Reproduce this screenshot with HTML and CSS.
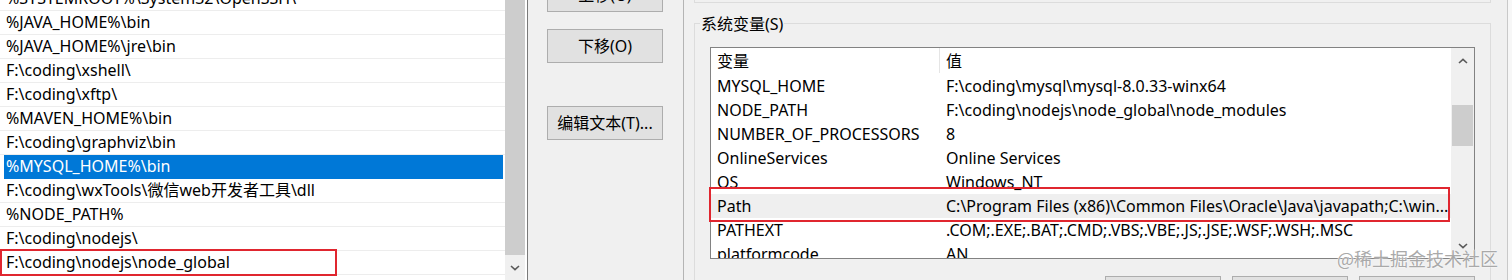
FILE: index.html
```html
<!DOCTYPE html>
<html lang="zh-CN">
<head>
<meta charset="utf-8">
<title>环境变量</title>
<link rel="stylesheet" href="styles.css">
</head>
<body>
<div class="screen">
  <section class="edit-dlg">
    <div class="pathlist">
      <div class="path-rows">
        <div class="prow">%SYSTEMROOT%\System32\OpenSSH\</div>
        <div class="prow">%JAVA_HOME%\bin</div>
        <div class="prow">%JAVA_HOME%\jre\bin</div>
        <div class="prow">F:\coding\xshell\</div>
        <div class="prow">F:\coding\xftp\</div>
        <div class="prow">%MAVEN_HOME%\bin</div>
        <div class="prow">F:\coding\graphviz\bin</div>
        <div class="prow sel">%MYSQL_HOME%\bin</div>
        <div class="prow">F:\coding\wxTools\微信web开发者工具\dll</div>
        <div class="prow">%NODE_PATH%</div>
        <div class="prow">F:\coding\nodejs\</div>
        <div class="prow">F:\coding\nodejs\node_global<span class="mark mark-left"></span></div>
        <div class="prow"></div>
      </div>
      <div class="pscroll">
        <div class="pthumb"></div>
        <div class="arrow arrow-down">
          <svg width="10" height="6" viewBox="0 0 10 6"><path d="M1 1l4 3.6L9 1" fill="none" stroke="#5a5a5a" stroke-width="1.6"/></svg>
        </div>
      </div>
    </div>
    <div class="btn-col">
      <button class="btn btn-up">上移(U)</button>
      <button class="btn btn-down">下移(O)</button>
      <button class="btn btn-edit">编辑文本(T)...</button>
    </div>
  </section>

  <section class="env-dlg">
    <div class="ug-end"></div>
    <div class="group">
      <div class="g-title">系统变量(S)</div>
      <div class="sys-list">
        <div class="sys-view">
          <div class="sys-head">
            <div class="c1 hc1">变量</div>
            <div class="c2">值</div>
          </div>
          <div class="sys-row"><div class="c1">MYSQL_HOME</div><div class="c2">F:\coding\mysql\mysql-8.0.33-winx64</div></div>
          <div class="sys-row"><div class="c1">NODE_PATH</div><div class="c2">F:\coding\nodejs\node_global\node_modules</div></div>
          <div class="sys-row"><div class="c1">NUMBER_OF_PROCESSORS</div><div class="c2">8</div></div>
          <div class="sys-row"><div class="c1">OnlineServices</div><div class="c2">Online Services</div></div>
          <div class="sys-row"><div class="c1">OS</div><div class="c2">Windows_NT</div></div>
          <div class="sys-row hl"><div class="c1">Path</div><div class="c2">C:\Program Files (x86)\Common Files\Oracle\Java\javapath;C:\win...</div></div>
          <div class="sys-row"><div class="c1">PATHEXT</div><div class="c2">.COM;.EXE;.BAT;.CMD;.VBS;.VBE;.JS;.JSE;.WSF;.WSH;.MSC</div></div>
          <div class="sys-row"><div class="c1">platformcode</div><div class="c2">AN</div></div>
        </div>
        <div class="sys-scroll">
          <div class="arrow arrow-up">
            <svg width="10" height="6" viewBox="0 0 10 6"><path d="M1 5l4-3.6L9 5" fill="none" stroke="#5a5a5a" stroke-width="1.6"/></svg>
          </div>
          <div class="sthumb"></div>
          <div class="sspacer"></div>
          <div class="arrow arrow-down2">
            <svg width="10" height="6" viewBox="0 0 10 6"><path d="M1 1l4 3.6L9 1" fill="none" stroke="#5a5a5a" stroke-width="1.6"/></svg>
          </div>
        </div>
        <span class="mark mark-right"></span>
      </div>
      <div class="sys-btns">
        <button class="btn">新建(W)...</button>
        <button class="btn">编辑(I)...</button>
        <button class="btn">删除(L)</button>
      </div>
    </div>
  </section>
  <div class="side-edge"></div>

  <div class="wm">@稀土掘金技术社区</div>
</div>
</body>
</html>
```

FILE: styles.css
```css
* { box-sizing: border-box; }

html, body {
  margin: 0;
  padding: 0;
}

body {
  width: 1512px;
  height: 280px;
  overflow: hidden;
  background: #f0f0f0;
  font-family: "Noto Sans", "Noto Sans CJK SC", sans-serif;
  font-size: 16px;
  color: #000;
}

.screen {
  position: relative;
  display: flex;
  width: 1512px;
  height: 280px;
  overflow: hidden;
  background: #f7f7f7;
}

/* ---------- left: edit environment variable dialog ---------- */
.edit-dlg {
  display: flex;
  flex: none;
  width: 684px;
  height: 280px;
  background: #f0f0f0;
  border-right: 1px solid #b4b4b4;
}

.pathlist {
  display: flex;
  flex: none;
  width: 528px;
  height: 280px;
  background: #fff;
  border-right: 1px solid #7a7a7a;
}

.path-rows {
  flex: none;
  width: 505px;
  margin-top: -13px;
}

.prow {
  position: relative;
  height: 24px;
  line-height: 23px;
  padding-left: 6px;
  border-bottom: 1px solid #ededed;
  white-space: nowrap;
}

.prow.sel {
  margin: 0 2px 0 4px;
  padding-left: 2px;
  background: #0078d7;
  border-bottom-color: #0078d7;
  color: #fff;
}

.mark {
  position: absolute;
  border: 2px solid #e0262f;
  pointer-events: none;
}

.mark-left {
  left: 0;
  top: -2px;
  width: 337px;
  height: 27px;
}

.pscroll {
  display: flex;
  flex: none;
  flex-direction: column;
  width: 20px;
  background: #f0f0f0;
}

.pthumb {
  flex: 1;
  background: #cdcdcd;
}

.arrow {
  display: flex;
  flex: none;
  align-items: center;
  justify-content: center;
  height: 25px;
}

.btn-col {
  display: flex;
  flex: none;
  flex-direction: column;
  width: 116px;
  margin-left: 19px;
}

.btn {
  flex: none;
  width: 116px;
  height: 34px;
  padding: 0;
  border: 1px solid #adadad;
  background: #e1e1e1;
  font: inherit;
  line-height: 32px;
  color: #000;
  text-align: center;
}

.btn-up { margin-top: -22px; }
.btn-down { margin-top: 17px; }
.btn-edit { margin-top: 43px; }

/* ---------- right: environment variables dialog ---------- */
.env-dlg {
  flex: none;
  width: 824px;
  height: 280px;
  padding-left: 10px;
  background: #f0f0f0;
  border-right: 1px solid #c9c9c9;
}

.ug-end {
  width: 797px;
  height: 3px;
  border: 1px solid #dcdcdc;
  border-top: none;
}

.group {
  width: 797px;
  height: 260px;
  margin-top: 20px;
  border: 1px solid #dcdcdc;
  border-bottom: none;
}

.g-title {
  width: max-content;
  height: 24px;
  margin: -12px 0 0 5px;
  padding: 0 1px;
  line-height: 24px;
  background: #f0f0f0;
}

.sys-list {
  position: relative;
  display: flex;
  width: 765px;
  height: 212px;
  margin: 11px 0 0 15px;
  border: 1px solid #828282;
  background: #fff;
}

.sys-view {
  flex: none;
  width: 740px;
  height: 210px;
  overflow: hidden;
}

.sys-head {
  display: flex;
  height: 26px;
  line-height: 26px;
}

.sys-row {
  display: flex;
  height: 24px;
  line-height: 24px;
  white-space: nowrap;
}

.sys-row.hl {
  background: #efefef;
}

.c1 {
  flex: none;
  width: 229px;
  padding-left: 6px;
}

.hc1 {
  height: 25px;
  border-right: 1px solid #e5e5e5;
}

.c2 {
  padding-left: 6px;
  white-space: nowrap;
}

.sys-scroll {
  display: flex;
  flex: none;
  flex-direction: column;
  width: 23px;
  background: #f0f0f0;
}

.arrow-up { height: 26px; }

.sthumb {
  flex: none;
  height: 41px;
  margin: 31px 1px 0 1px;
  background: #cdcdcd;
}

.sspacer { flex: 1; }

.mark-right {
  left: -2px;
  top: 139px;
  width: 741px;
  height: 35px;
}

.sys-btns {
  display: flex;
  justify-content: flex-end;
  gap: 11px;
  width: 765px;
  margin: 17px 0 0 15px;
}

.side-edge {
  flex: 1;
  background: #f7f7f7;
}

.wm {
  position: absolute;
  right: 14px;
  top: 246px;
  font-family: "Noto Sans CJK SC", sans-serif;
  font-size: 18px;
  line-height: 24px;
  color: #a9a9a9;
  text-shadow: 0 0 2px #fff, 0 0 1px #fff;
  white-space: nowrap;
}
```
